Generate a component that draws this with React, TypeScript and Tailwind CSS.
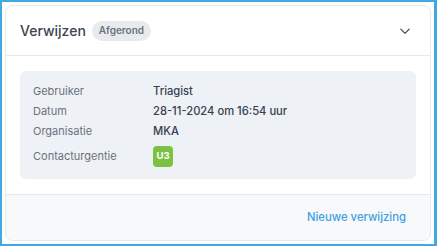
import React from "react";

export default function App() {
  const rows: [string, string][] = [
    ["Gebruiker", "Triagist"],
    ["Datum", "28-11-2024 om 16:54 uur"],
    ["Organisatie", "MKA"],
  ];
  return (
    <div
      className="w-[437px] h-[246px] bg-white border-2 border-[#3fa9e0] border-r-[3px] p-[3px] box-border"
      style={{ fontFamily: "Inter, 'Noto Sans', sans-serif" }}
    >
      <div className="h-full w-full rounded-[8px] border border-[#e5e8ec] flex flex-col overflow-hidden">
        <div className="h-[50px] flex items-center pl-[14px] pr-[18px] border-b border-[#e5e8ec] shrink-0">
          <span className="text-[14px] font-medium text-[#3b4350]">Verwijzen</span>
          <span className="ml-[6px] h-[20px] px-[7px] rounded-full bg-[#e8eaed] text-[10px] font-semibold text-[#6b7280] flex items-center">
            Afgerond
          </span>
          <svg
            className="ml-auto"
            width="14"
            height="14"
            viewBox="0 0 24 24"
            fill="none"
            stroke="#4b5563"
            strokeWidth="2.2"
            strokeLinecap="round"
            strokeLinejoin="round"
          >
            <path d="M5 9l7 7 7-7" />
          </svg>
        </div>
        <div className="px-[14px] py-[15px] shrink-0">
          <div className="rounded-[6px] bg-[#eef1f5] pl-[13px] pt-[10px] pb-[8px] grid grid-cols-[120px_1fr] grid-rows-[20px_20px_21px_29px] items-center">
            {rows.map(([k, v]) => (
              <React.Fragment key={k}>
                <span className="text-[11px] text-[#6b7280]">{k}</span>
                <span className="text-[11.2px] text-[#374151] font-medium">{v}</span>
              </React.Fragment>
            ))}
            <span className="text-[11px] text-[#6b7280]">Contacturgentie</span>
            <span className="h-[21px] w-[20px] rounded-[4px] bg-[#7cc142] text-white text-[9.5px] font-bold flex items-center justify-center">
              U3
            </span>
          </div>
        </div>
        <div className="flex-1 bg-[#f8f9fb] border-t border-[#e5e8ec] flex items-center justify-end pr-[24px]">
          <span className="text-[11.3px] font-medium text-[#3fa0e0]">Nieuwe verwijzing</span>
        </div>
      </div>
    </div>
  );
}
